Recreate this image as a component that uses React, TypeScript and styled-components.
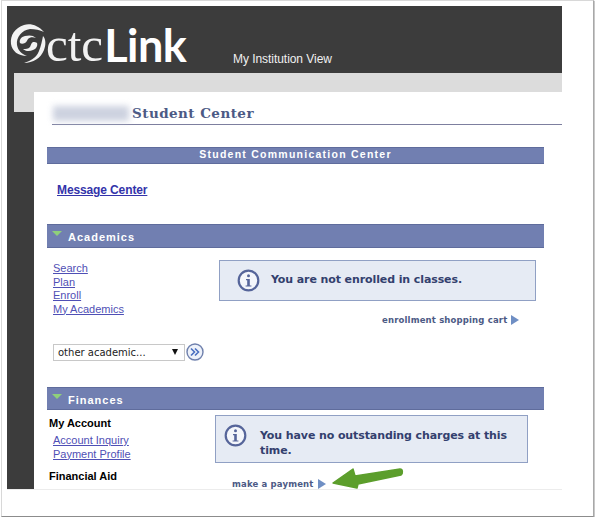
import React from 'react'
import styled, { createGlobalStyle } from 'styled-components'

const GlobalStyle = createGlobalStyle`
  html, body {
    margin: 0;
    padding: 0;
    background: #fff;
    font-family: "Liberation Sans", Arial, sans-serif;
  }
`

const Frame = styled.div`
  position: relative;
  box-sizing: border-box;
  width: 593px;
  height: 517px;
  margin-left: 1px;
  padding: 5px 30px 0 5px;
  background: #fff;
  border: 1px solid #d8d8d8;
  border-right-color: #a8a8a8;
  border-bottom-color: #8c8c8c;
  box-shadow: 1px 1px 1px #c8c8c8;
`

const Shot = styled.div`
  width: 555px;
  height: 483px;
  overflow: hidden;
  display: flex;
  flex-direction: column;
  background: #3c3c3c;
  border-bottom: 1px solid #ececec;
`

const Header = styled.header`
  flex: none;
  height: 67px;
  display: flex;
  align-items: flex-end;
  color: #fff;
`

const Logo = styled.div`
  display: flex;
  align-items: flex-end;
  width: 226px;
  height: 58px;
  padding-left: 3px;
  box-sizing: border-box;
`

const Swirl = styled.svg`
  flex: none;
  width: 36px;
  height: 42px;
  margin-bottom: 8px;
`

const LogoThin = styled.span`
  font-family: "Liberation Serif", serif;
  font-size: 49px;
  line-height: 56px;
  color: #f2f2f2;
`

const LogoBold = styled.span`
  margin-left: 1px;
  font-family: Lato, sans-serif;
  font-weight: 700;
  font-size: 45px;
  line-height: 56px;
  letter-spacing: -0.5px;
`

const Institution = styled.span`
  font-size: 12px;
  line-height: 14px;
  margin-bottom: 7px;
  letter-spacing: -0.05px;
  color: #f0f0f0;
`

const Band = styled.div`
  flex: none;
  height: 19px;
  margin-left: 7px;
  background: #dcdcdc;
`

const Body = styled.div`
  flex: 1;
  display: flex;
  min-height: 0;
`

const Gutter = styled.div`
  flex: none;
  width: 27px;
  padding-left: 7px;
  box-sizing: border-box;
`

const GutterTab = styled.div`
  height: 20px;
  background: #dcdcdc;
`

const Content = styled.main`
  flex: 1;
  background: #fff;
  overflow: hidden;
`

const TitleRow = styled.div`
  display: flex;
  align-items: flex-end;
  box-sizing: content-box;
  height: 32px;
  margin-left: 18px;
  border-bottom: 1px solid #7d7f9f;
`

const BlurredName = styled.div`
  width: 76px;
  height: 15px;
  margin: 0 3px 3px 1px;
  background: #cdd2e0;
  filter: blur(3px);
`

const Title = styled.h1`
  margin: 0 0 3px;
  font-family: "DejaVu Serif", serif;
  font-size: 13.5px;
  line-height: 16px;
  font-weight: 700;
  letter-spacing: 0.45px;
  color: #4c5a85;
`

const Panels = styled.div`
  width: 497px;
  margin: 22px 0 0 13px;
`

const Bar = styled.div<{ $height: number; $center?: boolean }>`
  display: flex;
  align-items: center;
  justify-content: ${(p) => (p.$center ? 'center' : 'flex-start')};
  height: ${(p) => p.$height}px;
  padding: ${(p) => (p.$center ? '0 0 3px' : '2px 0 0 5px')};
  box-sizing: border-box;
  background: #717fb1;
  border-top: 1px solid #5f6c9c;
  border-bottom: 1px solid #5f6c9c;
  color: #fff;
  font-size: ${(p) => (p.$center ? 10.5 : 11)}px;
  font-weight: 700;
  letter-spacing: ${(p) => (p.$center ? 1.25 : 1)}px;
`

const BarTriangle = styled.span`
  align-self: flex-start;
  width: 0;
  height: 0;
  margin: 4px 6px 0 0;
  border-left: 5px solid transparent;
  border-right: 5px solid transparent;
  border-top: 5px solid #8fd07a;
`

const MessageBlock = styled.div`
  height: 60px;
  padding-left: 10px;
  padding-top: 16px;
  box-sizing: border-box;
`

const MessageLink = styled.a`
  font-size: 12px;
  line-height: 14px;
  font-weight: 700;
  letter-spacing: -0.12px;
  color: #3333aa;
  text-decoration: underline;
`

const Row = styled.div<{ $height: number }>`
  display: flex;
  height: ${(p) => p.$height}px;
  overflow: hidden;
`

const LeftCol = styled.div<{ $width: number }>`
  flex: none;
  width: ${(p) => p.$width}px;
  box-sizing: border-box;
`

const LinkList = styled.div<{ $indent: number; $top: number }>`
  display: flex;
  flex-direction: column;
  margin: ${(p) => p.$top}px 0 0 ${(p) => p.$indent}px;
`

const NavLink = styled.a`
  font-size: 11px;
  line-height: 13.5px;
  color: #4f4fb5;
  text-decoration: underline;
`

const Heading = styled.div<{ $top: number }>`
  margin: ${(p) => p.$top}px 0 0 2px;
  font-size: 11px;
  line-height: 14px;
  font-weight: 700;
  color: #000;
`

const SelectRow = styled.div`
  display: flex;
  align-items: center;
  margin: 27px 0 0 6px;
`

const FakeSelect = styled.div`
  display: flex;
  align-items: center;
  justify-content: space-between;
  box-sizing: border-box;
  width: 132px;
  height: 17px;
  padding: 0 6px 0 4px;
  background: #fff;
  border: 1px solid #c8c8c8;
  font-family: "DejaVu Sans", sans-serif;
  font-size: 10px;
  color: #222;
`

const SelectCaret = styled.span`
  width: 0;
  height: 0;
  border-left: 3px solid transparent;
  border-right: 3px solid transparent;
  border-top: 6px solid #111;
`

const GoButton = styled.svg`
  flex: none;
  width: 18px;
  height: 18px;
  margin-left: 1px;
`

const RightCol = styled.div<{ $paddingTop: number }>`
  flex: 1;
  padding-top: ${(p) => p.$paddingTop}px;
`

const InfoBox = styled.div<{ $width: number; $height: number; $pad: number; $pinned?: boolean }>`
  display: flex;
  align-items: ${(p) => (p.$pinned ? 'flex-start' : 'center')};
  box-sizing: border-box;
  width: ${(p) => p.$width}px;
  height: ${(p) => p.$height}px;
  padding: ${(p) => (p.$pinned ? 8 : 0)}px 0 0 ${(p) => p.$pad}px;
  background: #e6ebf4;
  border: 1px solid #90a0c4;
`

const InfoIcon = styled.svg`
  flex: none;
  width: 23px;
  height: 23px;
`

const InfoText = styled.div<{ $gap: number; $top?: number }>`
  margin: ${(p) => p.$top ?? 0}px 0 ${(p) => (p.$top ? 0 : 2)}px ${(p) => p.$gap}px;
  font-family: "DejaVu Sans", sans-serif;
  font-size: 11px;
  line-height: 15px;
  font-weight: 700;
  letter-spacing: -0.1px;
  color: #33406e;
`

const ActionLink = styled.div<{ $top: number; $left: number }>`
  display: flex;
  align-items: center;
  margin: ${(p) => p.$top}px 0 0 ${(p) => p.$left}px;
  font-family: "DejaVu Sans", sans-serif;
  font-size: 8.5px;
  line-height: 12px;
  font-weight: 700;
  letter-spacing: 0.16px;
  color: #4c5a85;
`

const ActionTriangle = styled.span`
  width: 0;
  height: 0;
  margin-left: 4px;
  border-top: 5px solid transparent;
  border-bottom: 5px solid transparent;
  border-left: 8px solid #6f8fc4;
`

const Arrow = styled.svg`
  position: absolute;
  left: 325px;
  top: 461px;
  width: 85px;
  height: 36px;
`

const InfoGlyph = () => (
  <InfoIcon viewBox="0 0 23 23">
    <circle cx="11.5" cy="11.5" r="9.8" fill="#f4f6fb" stroke="#56659a" strokeWidth="2.2" />
    <circle cx="11.5" cy="6.8" r="1.5" fill="#56659a" />
    <path d="M9 10h3.8v6.4H14.4v1.2H8.6v-1.2h1.6v-5.2H9z" fill="#56659a" />
  </InfoIcon>
)

export default function App() {
  return (
    <>
      <GlobalStyle />
      <Frame>
        <Shot>
          <Header>
            <Logo>
              <Swirl viewBox="0 0 36 42">
                <path d="M34 9C28 2 20 0 14 2 5 5 0 12 1 21c1 7 7 12 16 12-5-2-9-5-10-11C6 14 12 7 20 6c5 0 10 1 14 3z" fill="#f2f2f2" />
                <path d="M33 13c3 3 3 9 1 14-3 8-11 13-20 13 5-2 12-4 15-12 2-5 3-10 4-15z" fill="#f2f2f2" />
                <path d="M10 20c-1-3 1-6 5-7 4-1 8-1 11 2-3-1-6-1-8 1-1 1-1 3-3 4-2 1-4 1-5 0z" fill="#f2f2f2" />
                <path d="M27 20c1 3-1 6-4 7-4 2-8 1-10-1 3 0 5 0 7-2 1-2 1-4 3-5 2 0 3 0 4 1z" fill="#f2f2f2" />
              </Swirl>
              <LogoThin>ctc</LogoThin>
              <LogoBold>Link</LogoBold>
            </Logo>
            <Institution>My Institution View</Institution>
          </Header>
          <Band />
          <Body>
            <Gutter>
              <GutterTab />
            </Gutter>
            <Content>
              <TitleRow>
                <BlurredName />
                <Title>Student Center</Title>
              </TitleRow>
              <Panels>
                <Bar $height={17} $center>
                  Student Communication Center
                </Bar>
                <MessageBlock>
                  <MessageLink>Message Center</MessageLink>
                </MessageBlock>

                <Bar $height={24}>
                  <BarTriangle />
                  Academics
                </Bar>
                <Row $height={139}>
                  <LeftCol $width={172}>
                    <LinkList $indent={6} $top={14}>
                      <NavLink>Search</NavLink>
                      <NavLink>Plan</NavLink>
                      <NavLink>Enroll</NavLink>
                      <NavLink>My Academics</NavLink>
                    </LinkList>
                    <SelectRow>
                      <FakeSelect>
                        other academic...
                        <SelectCaret />
                      </FakeSelect>
                      <GoButton viewBox="0 0 18 18">
                        <circle cx="9" cy="9" r="8" fill="#eef2fa" stroke="#6f80ad" strokeWidth="1.4" />
                        <path d="M5 5.5 8.5 9 5 12.5M9 5.5 12.5 9 9 12.5" fill="none" stroke="#4a6fc0" strokeWidth="1.6" />
                      </GoButton>
                    </SelectRow>
                  </LeftCol>
                  <RightCol $paddingTop={12}>
                    <InfoBox $width={317} $height={41} $pad={17}>
                      <InfoGlyph />
                      <InfoText $gap={11}>You are not enrolled in classes.</InfoText>
                    </InfoBox>
                    <ActionLink $top={13} $left={163}>
                      enrollment shopping cart
                      <ActionTriangle />
                    </ActionLink>
                  </RightCol>
                </Row>

                <Bar $height={23}>
                  <BarTriangle />
                  Finances
                </Bar>
                <Row $height={90}>
                  <LeftCol $width={168}>
                    <Heading $top={6}>My Account</Heading>
                    <LinkList $indent={6} $top={4}>
                      <NavLink>Account Inquiry</NavLink>
                      <NavLink>Payment Profile</NavLink>
                    </LinkList>
                    <Heading $top={8}>Financial Aid</Heading>
                  </LeftCol>
                  <RightCol $paddingTop={5}>
                    <InfoBox $width={313} $height={48} $pad={8} $pinned>
                      <InfoGlyph />
                      <InfoText $gap={13} $top={4}>
                        You have no outstanding charges at this time.
                      </InfoText>
                    </InfoBox>
                    <ActionLink $top={15} $left={17}>
                      make a payment
                      <ActionTriangle />
                    </ActionLink>
                  </RightCol>
                </Row>
              </Panels>
            </Content>
          </Body>
        </Shot>
        <Arrow viewBox="0 0 85 36">
          <path
            d="M6 21 26 7l2 7 45-7c3 0 3 5 1 6l-43 9-1 4z"
            fill="#5c9e2c"
            stroke="#5c9e2c"
            strokeWidth="1.5"
            strokeLinejoin="round"
          />
        </Arrow>
      </Frame>
    </>
  )
}
